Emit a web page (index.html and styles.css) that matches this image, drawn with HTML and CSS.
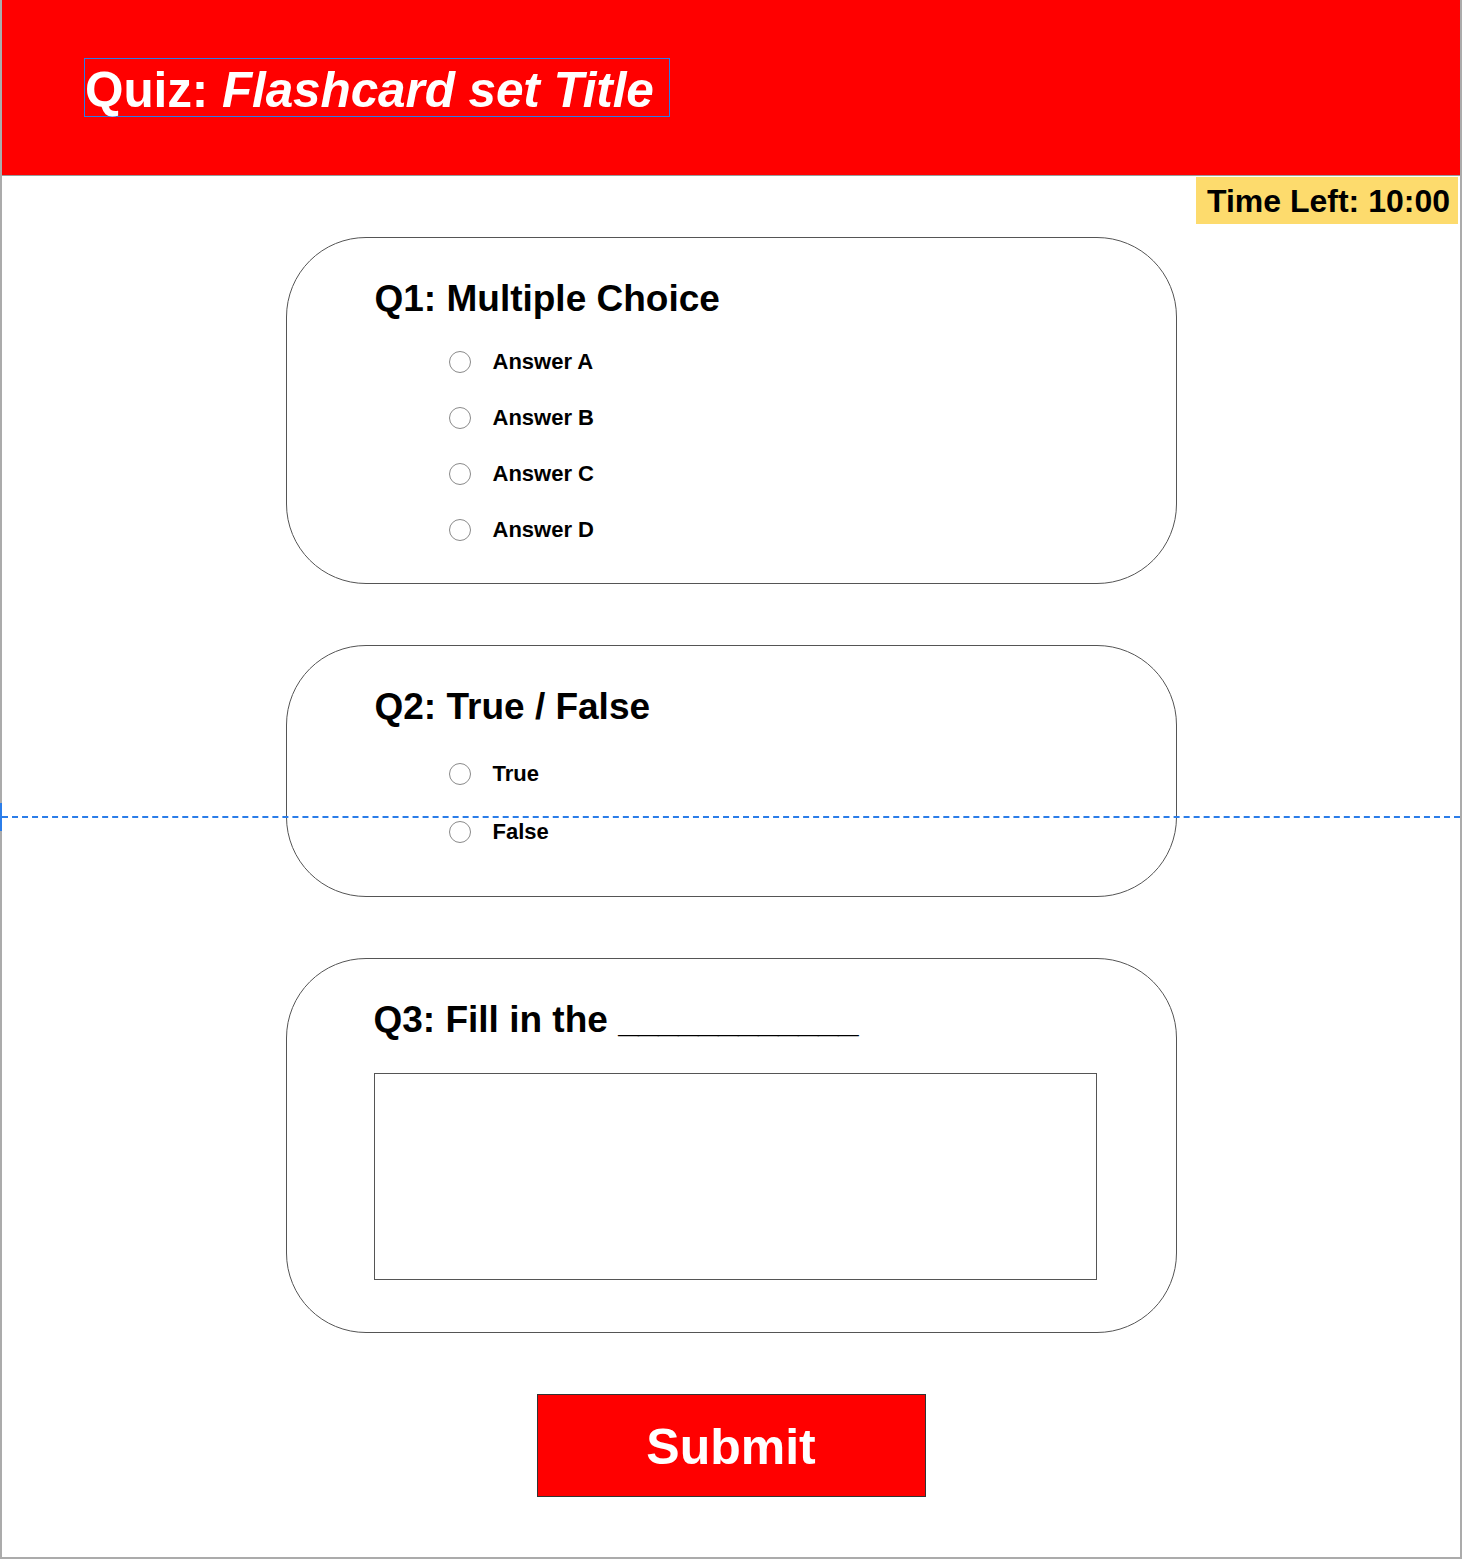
FILE: index.html
```html
<!DOCTYPE html>
<html lang="en">

<head>
  <meta charset="UTF-8" />
  <title>Quiz: Flashcard set Title</title>
  <link rel="stylesheet" href="styles.css">
</head>

<body>
  <div class="frame">
    <header class="topbar">
      <h1 class="title">Quiz: <em>Flashcard set Title</em></h1>
    </header>

    <div class="timer-row">
      <div class="timer">Time Left: 10:00</div>
    </div>

    <main class="questions">
      <section class="card card-mc">
        <h2>Q1: Multiple Choice</h2>
        <div class="options">
          <label class="option"><span class="radio"></span>Answer A</label>
          <label class="option"><span class="radio"></span>Answer B</label>
          <label class="option"><span class="radio"></span>Answer C</label>
          <label class="option"><span class="radio"></span>Answer D</label>
        </div>
      </section>

      <section class="card card-tf">
        <h2>Q2: True / False</h2>
        <div class="options">
          <label class="option"><span class="radio"></span>True</label>
          <label class="option"><span class="radio"></span>False</label>
        </div>
      </section>

      <section class="card card-fill">
        <h2>Q3: Fill in the <span class="blank">____________</span></h2>
        <div class="answer-box"></div>
      </section>

      <button class="submit">Submit</button>
    </main>

    <!-- design tool guide line -->
    <div class="guide"></div>
    <div class="guide-mark"></div>
  </div>
</body>

</html>
```

FILE: styles.css
```css
* {
  box-sizing: border-box;
}

body {
  margin: 0;
  padding: 0;
  font-family: 'Liberation Sans', Arial, Helvetica, sans-serif;
  background: #fff;
  color: #000;
}

.frame {
  position: relative;
  width: 1462px;
  height: 1559px;
  border-left: 2px solid #ababab;
  border-right: 2px solid #ababab;
  border-bottom: 2px solid #ababab;
  background: #fff;
}

.topbar {
  height: 176px;
  background: #ff0000;
  border-bottom: 1px solid #9a9a9a;
  padding: 58px 0 0 82px;
}

.title {
  display: inline-block;
  margin: 0;
  height: 59px;
  padding: 0 15px 0 0;
  border: 1px solid #2b7de9;
  color: #fff;
  font-size: 49.5px;
  font-weight: bold;
  line-height: 61px;
  letter-spacing: -0.1px;
}

.title em {
  font-style: italic;
}

.timer-row {
  display: flex;
  justify-content: flex-end;
  padding: 1px 2px 0 0;
}

.timer {
  background: #fddb6d;
  font-size: 32px;
  font-weight: bold;
  height: 47px;
  line-height: 49px;
  padding: 0 8px 0 11px;
}

.questions {
  display: flex;
  flex-direction: column;
  align-items: center;
  gap: 61px;
  margin-top: 13px;
}

.card {
  width: 891px;
  border: 1px solid #555;
  border-radius: 80px;
  padding: 42px 88px 0 88px;
}

.card-mc {
  height: 347px;
}

.card-tf {
  height: 252px;
}

.card-fill {
  height: 375px;
  padding-left: 87px;
}

.card h2 {
  margin: 0;
  font-size: 37px;
  line-height: 37px;
  font-weight: bold;
}

.blank {
  letter-spacing: -0.6px;
}

.options {
  display: flex;
  flex-direction: column;
  margin: 17px 0 0 74px;
}

.card-tf .options {
  margin-top: 20px;
}

.option {
  display: flex;
  align-items: center;
  height: 56px;
  font-size: 22px;
  font-weight: bold;
}

.card-tf .option {
  height: 58px;
}

.radio {
  width: 22px;
  height: 22px;
  border: 1px solid #8a8a8a;
  border-radius: 50%;
  margin-right: 22px;
  flex-shrink: 0;
}

.answer-box {
  width: 723px;
  height: 207px;
  margin-top: 35px;
  border: 1px solid #555;
}

.submit {
  width: 389px;
  height: 103px;
  padding-top: 4px;
  background: #ff0000;
  border: 1px solid #333;
  color: #fff;
  font-family: 'Liberation Sans', Arial, Helvetica, sans-serif;
  font-size: 50px;
  font-weight: bold;
  cursor: pointer;
}

.guide {
  position: absolute;
  left: 0;
  right: 0;
  top: 816px;
  border-top: 2px dashed #2b7de9;
}

.guide-mark {
  position: absolute;
  left: -2px;
  top: 803px;
  width: 2px;
  height: 28px;
  background: #2b7de9;
}
```
